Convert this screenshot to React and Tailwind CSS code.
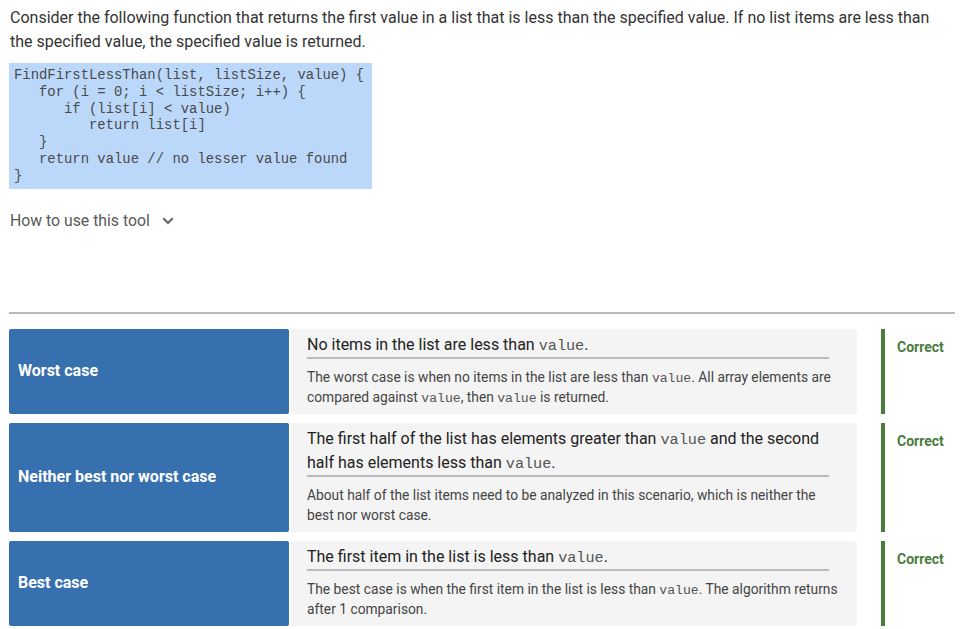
import React from "react";

const code = `FindFirstLessThan(list, listSize, value) {
   for (i = 0; i < listSize; i++) {
      if (list[i] < value)
         return list[i]
   }
   return value // no lesser value found
}`;

const C = ({ children }) => (
  <code className="font-['Liberation_Mono',monospace] text-[0.95em] leading-none text-[#555]">{children}</code>
);

const rows = [
  {
    label: "Worst case",
    title: (
      <>
        No items in the list are less than <C>value</C>.
      </>
    ),
    body: (
      <>
        The worst case is when no items in the list are less than <C>value</C>. All array elements are compared
        against <C>value</C>, then <C>value</C> is returned.
      </>
    ),
  },
  {
    label: "Neither best nor worst case",
    title: (
      <>
        The first half of the list has elements greater than <C>value</C> and the second half has elements less
        than <C>value</C>.
      </>
    ),
    body: (
      <>About half of the list items need to be analyzed in this scenario, which is neither the best nor worst case.</>
    ),
  },
  {
    label: "Best case",
    title: (
      <>
        The first item in the list is less than <C>value</C>.
      </>
    ),
    body: (
      <>
        The best case is when the first item in the list is less than <C>value</C>. The algorithm returns after 1
        comparison.
      </>
    ),
  },
];

export default function App() {
  return (
    <div className="w-[967px] min-h-[629px] bg-white pl-[9px] pt-[6px] font-['Roboto',sans-serif]">
      <p className="pl-px w-[940px] text-[16px] leading-[24px] text-[#333]">
        Consider the following function that returns the first value in a list that is less than the specified value. If
        no list items are less than the specified value, the specified value is returned.
      </p>

      <pre className="mt-[9px] w-[363px] bg-[#bbd8fb] px-[5px] py-[4px] font-['Liberation_Mono',monospace] text-[13.9px] leading-[16.8px] text-[#4a4a4a]">
        {code}
      </pre>

      <div className="mt-[20px] flex items-center gap-[12px] pl-px text-[15.8px] leading-[24px] text-[#5a5a5a]">
        <span>How to use this tool</span>
        <svg width="12" height="8" viewBox="0 0 12 8" className="mt-px">
          <path d="M1.3 1.3 L6 6 L10.7 1.3" fill="none" stroke="#666" strokeWidth="2.2" />
        </svg>
      </div>

      <div className="mt-[79px] h-[2px] w-[946px] bg-[#bbb]" />

      <div className="mt-[15px] flex flex-col gap-[9px]">
        {rows.map((r) => (
          <div key={r.label} className="flex items-stretch">
            <div className="flex w-[280px] items-center rounded-[2px] bg-[#3670ae] px-[9px] text-[16px] font-bold text-white">
              {r.label}
            </div>
            <div className="ml-[2px] w-[566px] rounded-r-[3px] bg-[#f4f4f4] pb-[7px] pl-[16px] pr-[16px] pt-[4px]">
              <div className="mr-[12px] border-b-2 border-[#bbb] text-[16px] leading-[24px] text-[#222]">{r.title}</div>
              <div className="mt-[8px] text-[13.8px] leading-[20px] text-[#444]">{r.body}</div>
            </div>
            <div className="ml-[24px] border-l-4 border-[#4a7c3e] pl-[12px] pt-[8px] text-[14px] font-bold leading-[20px] text-[#4a7c3e]">
              Correct
            </div>
          </div>
        ))}
      </div>
    </div>
  );
}
